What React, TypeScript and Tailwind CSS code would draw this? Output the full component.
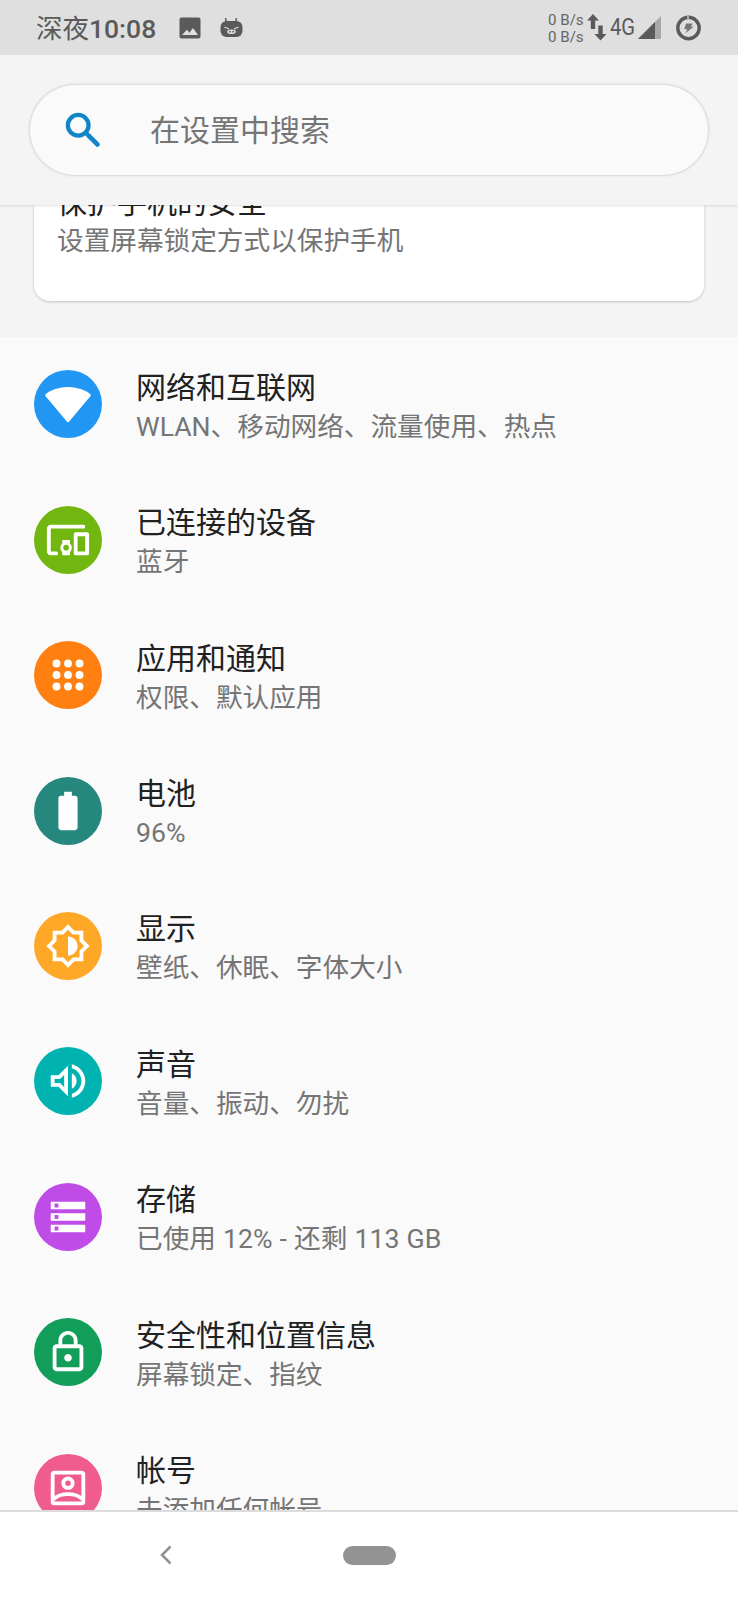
import type { ReactNode } from "react";

type Item = {
  title: string;
  summary: string;
  color: string;
  icon: ReactNode;
};

const items: Item[] = [
  {
    title: "网络和互联网",
    summary: "WLAN、移动网络、流量使用、热点",
    color: "bg-[#2196f3]",
    icon: <path d="M12.500 21.300c-.3.300-.7.300-1 0L.35 7.900c-.3-.4-.2-.8.1-1.100C2.500 5.100 6.500 3.100 12 3.100s9.500 2 11.550 3.700c.3.3.4.7.1 1.100z" />,
  },
  {
    title: "已连接的设备",
    summary: "蓝牙",
    color: "bg-[#72b70f]",
    icon: (
      <path d="M3 6h17.200c1 0 1-2 0-2H3c-1.100 0-2 .9-2 2v12c0 1.100.9 2 2 2h3c1 0 1-2 0-2H3V6zm10 6H9v1.780c-.61.55-1 1.330-1 2.220s.39 1.670 1 2.220V20h4v-1.780c.61-.55 1-1.340 1-2.220s-.39-1.670-1-2.220V12zm-2 5.500c-.83 0-1.500-.67-1.500-1.500s.67-1.500 1.500-1.500 1.500.67 1.500 1.500-.67 1.500-1.500 1.500zM22 8h-6c-.5 0-1 .5-1 1v10c0 .5.5 1 1 1h6c.5 0 1-.5 1-1V9c0-.5-.5-1-1-1zm-1 10h-4v-8h4v8z" />
    ),
  },
  {
    title: "应用和通知",
    summary: "权限、默认应用",
    color: "bg-[#ff7f11]",
    icon: (
      <>
        {[6, 12, 18].map(y => [6, 12, 18].map(x => <circle key={`${x}-${y}`} cx={x} cy={y} r="2.050" />))}
      </>
    ),
  },
  {
    title: "电池",
    summary: "96%",
    color: "bg-[#25877e]",
    icon: <path d="M15.670 4H14V2h-4v2H8.330C7.600 4 7 4.600 7 5.330v15.330C7 21.400 7.600 22 8.330 22h7.330c.74 0 1.340-.6 1.340-1.330V5.330C17 4.600 16.400 4 15.670 4z" />,
  },
  {
    title: "显示",
    summary: "壁纸、休眠、字体大小",
    color: "bg-[#ffa828]",
    icon: (
      <path d="M20 8.690V4h-4.690L12 .69 8.690 4H4v4.690L.69 12 4 15.310V20h4.690L12 23.310 15.310 20H20v-4.690L23.310 12 20 8.690zm-2 5.790V18h-3.520L12 20.480 9.520 18H6v-3.520L3.520 12 6 9.520V6h3.520L12 3.520 14.480 6H18v3.520L20.480 12 18 14.480zM12 7v10c2.760 0 5-2.240 5-5s-2.240-5-5-5z" />
    ),
  },
  {
    title: "声音",
    summary: "音量、振动、勿扰",
    color: "bg-[#00b2b0]",
    icon: (
      <path d="M3 9v6h4l5 5V4L7 9H3zm7-.17v6.340L7.830 13H5v-2h2.830L10 8.830zM16.500 12c0-1.770-1.020-3.290-2.500-4.030v8.050c1.480-.73 2.500-2.250 2.500-4.020zM14 3.230v2.060c2.890.86 5 3.540 5 6.710s-2.110 5.850-5 6.710v2.060c4.010-.91 7-4.490 7-8.770s-2.990-7.860-7-8.770z" />
    ),
  },
  {
    title: "存储",
    summary: "已使用 12% - 还剩 113 GB",
    color: "bg-[#bf4ce6]",
    icon: <path d="M3 20h18v-4H3v4zm2-3h2v2H5v-2zM3 4v4h18V4H3zm4 3H5V5h2v2zm-4 7h18v-4H3v4zm2-3h2v2H5v-2z" />,
  },
  {
    title: "安全性和位置信息",
    summary: "屏幕锁定、指纹",
    color: "bg-[#129e58]",
    icon: (
      <path d="M18 8h-1V6c0-2.760-2.240-5-5-5S7 3.240 7 6v2H6c-1.100 0-2 .9-2 2v10c0 1.100.9 2 2 2h12c1.100 0 2-.9 2-2V10c0-1.100-.9-2-2-2zM9 6c0-1.660 1.340-3 3-3s3 1.340 3 3v2H9V6zm9 14H6V10h12v10zm-6-3c1.100 0 2-.9 2-2s-.9-2-2-2-2 .9-2 2 .9 2 2 2z" />
    ),
  },
  {
    title: "帐号",
    summary: "未添加任何帐号",
    color: "bg-[#f15c8e]",
    icon: (
      <g fill="none" stroke="currentColor" strokeWidth="2">
        <rect x="4" y="4" width="16" height="16" rx="1" />
        <circle cx="12" cy="9.500" r="2.450" />
        <path d="M4.500 17.800C8 14.300 16 14.300 19.500 17.800" />
      </g>
    ),
  },
];

function StatusBar() {
  return (
    <div className="flex h-[55px] shrink-0 items-center bg-[#dfdfdf] pl-9 pr-[37px] text-[#5a5a5a]">
      <span className="w-[121px] whitespace-nowrap pt-[2px] text-[26.500px] leading-[55px] font-medium">
        <span className="font-normal">深夜</span>10:08
      </span>
      <svg className="ml-[22px] h-[22px] w-[22px]" viewBox="0 0 22 22" fill="currentColor">
        <path d="M2.500.5h17a2 2 0 0 1 2 2v17a2 2 0 0 1-2 2h-17a2 2 0 0 1-2-2v-17a2 2 0 0 1 2-2zM3 18h16l-5-7-3.600 4.700L8 12.700z" fillRule="evenodd" />
      </svg>
      <svg className="ml-[19px] h-[20px] w-[23px]" viewBox="0 0 23 20">
        <path d="M5.500 0l.8 4M16.500 0l-.8 4" stroke="currentColor" strokeWidth="1.500" />
        <rect x=".5" y="3" width="22" height="16" rx="6" fill="currentColor" />
        <path d="M4.500 9l4.500 2M18.500 9L14 11" stroke="#dfdfdf" strokeWidth="1.100" />
        <ellipse cx="11.500" cy="13.700" rx="4.300" ry="2.300" fill="#dfdfdf" />
        <circle cx="9.900" cy="13.700" r=".9" fill="currentColor" />
        <circle cx="13.100" cy="13.700" r=".9" fill="currentColor" />
      </svg>
      <div className="ml-auto flex items-center">
        <div className="mr-[3px] w-[36px] whitespace-nowrap pt-[2px] text-[15.100px] leading-[17px] text-[#666]">
          <div>0 B/s</div>
          <div>0 B/s</div>
        </div>
        <svg className="h-[27px] w-[20px]" viewBox="0 0 20 27" fill="currentColor">
          <path d="M6 0l6 6.500H8.200V15H3.800V6.500H0z" />
          <path d="M13.500 26.500l6-6.500h-3.800v-8.500h-4.400V20H7.500z" />
        </svg>
        <span className="ml-[3px] w-[24px] origin-left scale-x-[0.860] whitespace-nowrap text-[23.500px] leading-none">4G</span>
        <svg className="ml-[4px] h-[23px] w-[23px]" viewBox="0 0 23 23">
          <path d="M0 23L23 0v23z" fill="#a8a8a8" />
          <path d="M0 23L17 6v17z" fill="currentColor" />
        </svg>
        <svg className="ml-[15px] h-[26px] w-[25px]" viewBox="0 0 25 26">
          <circle cx="12.500" cy="13" r="10.700" fill="none" stroke="currentColor" strokeWidth="3.400" />
          <path d="M11 .5h2v3.700h-2z" fill="#a8a8a8" />
          <path d="M10 8.500h6.700L15 11.700h2.500L9.300 18.500l2-4.300H8.200z" fill="#777" />
        </svg>
      </div>
    </div>
  );
}

function SearchHeader() {
  return (
    <div className="relative z-10 h-[150px] shrink-0 bg-[#f4f4f4] px-[30px] pt-[30px] shadow-[0_0_3px_rgba(0,0,0,0.220)] [clip-path:inset(0_0_-6px_0)]">
      <div className="flex h-[90px] items-center rounded-full bg-[#fafafa] pl-[30px] shadow-[0_0_3px_rgba(0,0,0,0.260)]">
        <svg className="h-[46px] w-[46px] text-[#1085c7]" viewBox="0 0 24 24" fill="none" stroke="currentColor">
          <circle cx="9.500" cy="9.500" r="5.400" strokeWidth="2.200" />
          <path d="M13.700 13.700l1.700 1.700" strokeWidth="2.200" />
          <path d="M15.200 15.200l4.300 4.300" strokeWidth="2.500" strokeLinecap="round" />
        </svg>
        <span className="ml-11 pt-[2px] text-[30px] leading-[44px] text-[#757575]">在设置中搜索</span>
      </div>
    </div>
  );
}

function SettingRow({ item }: { item: Item }) {
  return (
    <li className="flex h-[135.400px] shrink-0 items-center pl-[34px]">
      <span className={`flex h-[68px] w-[68px] items-center justify-center rounded-full text-white ${item.color}`}>
        <svg className="mr-px h-[46px] w-[46px]" viewBox="0 0 24 24" fill="currentColor">
          {item.icon}
        </svg>
      </span>
      <div className="ml-[34px] whitespace-nowrap pt-[5px]">
        <div className="text-[30px] leading-[40px] text-[#212121]">{item.title}</div>
        <div className="text-[26.650px] leading-[38px] text-[#757575] [word-spacing:0.5px]">{item.summary}</div>
      </div>
    </li>
  );
}

export default function App() {
  return (
    <div className="flex h-[1600px] w-[738px] flex-col overflow-hidden bg-[#fafafa] font-[Roboto,'Noto_Sans_CJK_SC',sans-serif]">
      <StatusBar />
      <SearchHeader />

      <main className="flex min-h-0 flex-1 flex-col overflow-hidden">
        {/* suggestion card, scrolled halfway under the search bar */}
        <section className="h-[131.700px] shrink-0 bg-[#f4f4f4] px-[34px]">
          <div className="flex h-24 flex-col justify-end rounded-b-[16px] bg-white pb-[41px] pl-[23px] shadow-[0_1px_3px_rgba(0,0,0,0.200)]">
            <div className="text-[30px] leading-[40px] text-[#212121]">保护手机的安全</div>
            <div className="text-[26.650px] leading-[37px] text-[#757575]">设置屏幕锁定方式以保护手机</div>
          </div>
        </section>

        <ul className="flex flex-col">
          {items.map(item => (
            <SettingRow key={item.title} item={item} />
          ))}
        </ul>
      </main>

      <nav className="grid h-[90px] shrink-0 grid-cols-[333px_72px_333px] items-center border-t-2 border-[#dcdcdc] bg-white pb-[2px]">
        <svg className="mr-px h-[20px] w-[12px] justify-self-center" viewBox="0 0 12 20" fill="none" stroke="#929292" strokeWidth="2.600">
          <path d="M10.500 1.500L2 10l8.500 8.500" />
        </svg>
        <span className="h-[19px] w-[53px] justify-self-center rounded-full bg-[#939393]" />
      </nav>
    </div>
  );
}
